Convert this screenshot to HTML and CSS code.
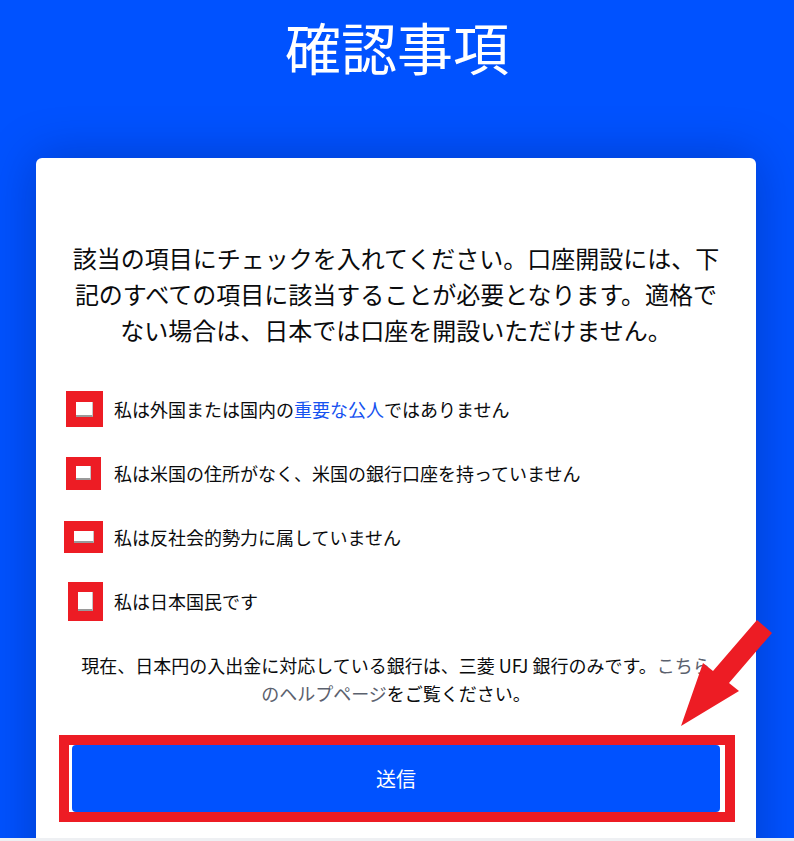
FILE: index.html
```html
<!DOCTYPE html>
<html lang="ja">
<head>
<meta charset="utf-8">
<title>確認事項</title>
<link rel="stylesheet" href="styles.css">
</head>
<body>
<div class="page">
  <h1 class="title">確認事項</h1>
  <section class="card">
    <p class="lead">該当の項目にチェックを入れてください。口座開設には、下記のすべての項目に該当することが必要となります。適格でない場合は、日本では口座を開設いただけません。</p>
    <ul class="checklist">
      <li class="check-row">
        <span class="mark mark-a"><span class="box"></span></span>
        <span class="label">私は外国または国内の<a class="link" href="#">重要な公人</a>ではありません</span>
      </li>
      <li class="check-row">
        <span class="mark mark-b"><span class="box"></span></span>
        <span class="label">私は米国の住所がなく、米国の銀行口座を持っていません</span>
      </li>
      <li class="check-row">
        <span class="mark mark-c"><span class="box"></span></span>
        <span class="label">私は反社会的勢力に属していません</span>
      </li>
      <li class="check-row">
        <span class="mark mark-d"><span class="box"></span></span>
        <span class="label">私は日本国民です</span>
      </li>
    </ul>
    <p class="note">現在、日本円の入出金に対応している銀行は、三菱 UFJ 銀行のみです。<a class="help" href="#">こちらのヘルプページ</a>をご覧ください。</p>
    <div class="highlight">
      <button class="submit" type="button">送信</button>
    </div>
  </section>
  <svg class="arrow" width="100" height="116" viewBox="0 0 100 116" aria-hidden="true">
    <polygon points="82,5 97,18 54,68 64,76 6,111 28,48 38,56" fill="#ed1c24"/>
  </svg>
</div>
<div class="strip"></div>
</body>
</html>
```

FILE: styles.css
```css
* { box-sizing: border-box; }

html, body {
  margin: 0;
  padding: 0;
}

body {
  background: #eef0f3;
  font-family: "Noto Sans CJK JP", "Noto Sans", sans-serif;
  color: #0a0b0d;
}

.page {
  position: relative;
  height: 838px;
  overflow: hidden;
  background: #0052ff;
  padding-top: 12px;
}

.title {
  margin: 0;
  text-align: center;
  color: #ffffff;
  font-size: 56px;
  line-height: 67px;
  font-weight: 400;
}

.card {
  margin: 79px 38px 0 36px;
  background: #ffffff;
  border-radius: 6px;
  padding: 82px 36px 80px;
  box-shadow: 0 0 50px rgba(0, 10, 60, 0.28);
}

.lead {
  margin: 0;
  text-align: center;
  font-size: 24px;
  line-height: 36px;
  color: #0a0b0d;
}

.checklist {
  list-style: none;
  margin: 29px 0 0;
  padding: 0;
}

.check-row {
  display: flex;
  align-items: center;
  height: 64px;
}

.mark {
  display: flex;
  align-items: center;
  justify-content: center;
  background: #ed1c24;
  flex: none;
}

.box {
  display: block;
  background: #ffffff;
  border-bottom: 2px solid #9a9a9a;
  border-right: 1px solid #c4c4c4;
}

.mark-a { width: 37px; height: 36px; margin-left: -6px; margin-right: 11px; }
.mark-a .box { width: 17px; height: 15px; }

.mark-b { width: 35px; height: 33px; margin-left: -6px; margin-right: 13px; }
.mark-b .box { width: 15px; height: 14px; }

.mark-c { width: 39px; height: 32px; margin-left: -8px; margin-right: 11px; }
.mark-c .box { width: 20px; height: 12px; }

.mark-d { width: 35px; height: 39px; margin-left: -4px; margin-right: 11px; }
.mark-d .box { width: 15px; height: 19px; }

.label {
  font-size: 18px;
  line-height: 24px;
  color: #0a0b0d;
}

.link {
  color: #1652f0;
  text-decoration: none;
}

.note {
  margin: 18px 0 0;
  padding: 0 8px;
  text-align: center;
  font-size: 18px;
  line-height: 28px;
  color: #0a0b0d;
}

.help {
  color: #5b616e;
  text-decoration: none;
}

.highlight {
  margin: 28px -15px 0 -13px;
  border: 10px solid #ed1c24;
  padding: 0 5px 0 3px;
  background: #ffffff;
}

.submit {
  display: block;
  width: 100%;
  height: 67px;
  border: none;
  border-radius: 4px;
  background: #0052ff;
  color: #ffffff;
  font-family: "Noto Sans CJK JP", "Noto Sans", sans-serif;
  font-size: 20px;
  cursor: pointer;
}

.arrow {
  position: absolute;
  left: 675px;
  top: 615px;
}

.strip {
  height: 3px;
  background: #eef0f3;
}
```
